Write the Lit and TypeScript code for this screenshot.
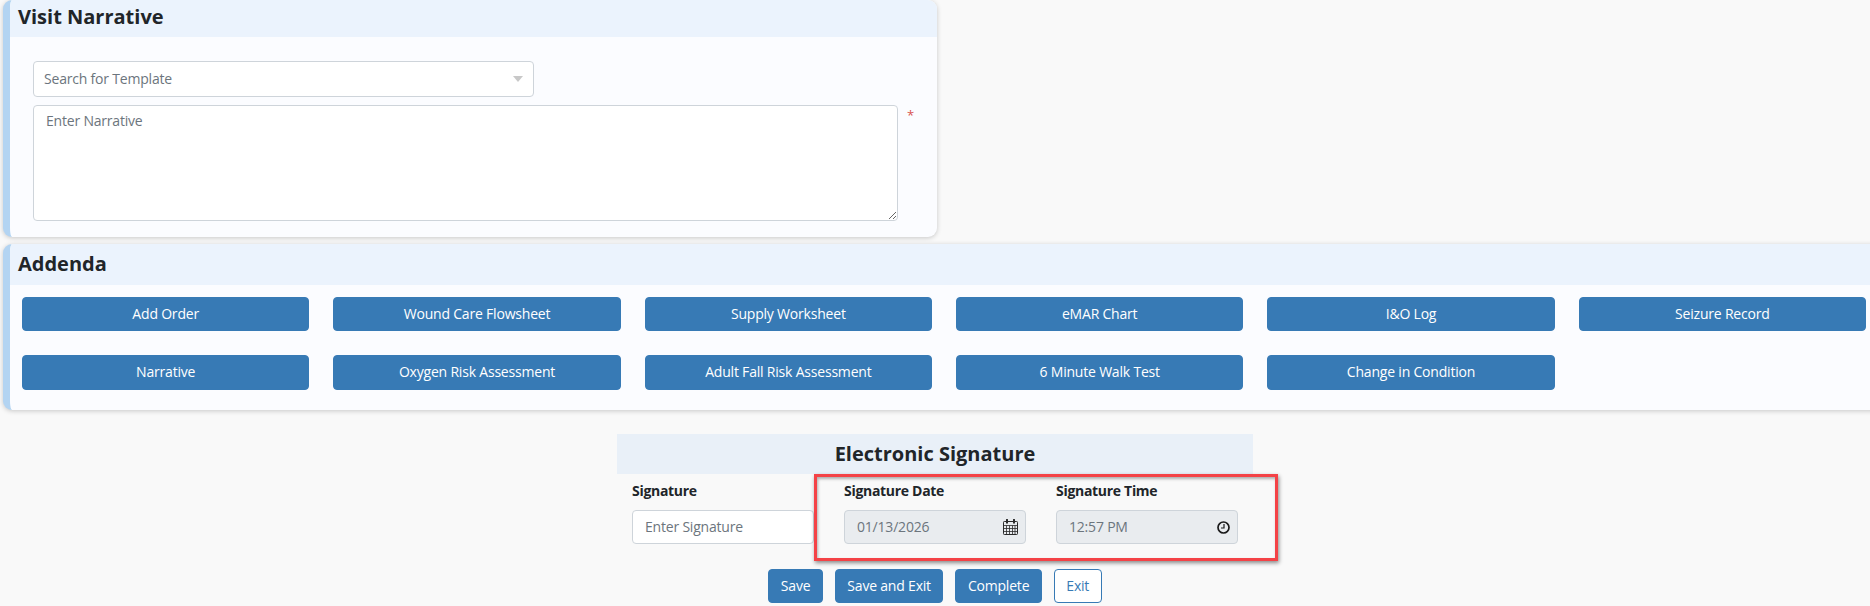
import { LitElement, html, css } from 'lit';
import { customElement } from 'lit/decorators.js';

const ADDENDA = [
  'Add Order', 'Wound Care Flowsheet', 'Supply Worksheet', 'eMAR Chart', 'I&O Log', 'Seizure Record',
  'Narrative', 'Oxygen Risk Assessment', 'Adult Fall Risk Assessment', '6 Minute Walk Test', 'Change in Condition',
];

const calendarIcon = html`
  <svg class="icon" width="15" height="16" viewBox="0 0 15 16" fill="none" stroke="#2a2a2a" stroke-width="1">
    <path d="M4 .8v3M11 .8v3" stroke-width="2" stroke-linecap="round"/>
    <rect x=".5" y="2.5" width="14" height="13" rx=".8"/>
    <path d="M.5 6.5h14M.5 9.5h14M.5 12.5h14M3.5 6.5v9M6.5 6.5v9M9.5 6.5v9M12 6.5v9" stroke-width=".8"/>
  </svg>`;

const clockIcon = html`
  <svg class="icon" width="13" height="13" viewBox="0 0 13 13" fill="none" stroke="#1a1a1a">
    <circle cx="6.5" cy="6.5" r="5.5" stroke-width="1.7"/>
    <path d="M7 3v4H4" stroke-width="1.2"/>
  </svg>`;

@customElement('app-root')
export class AppRoot extends LitElement {
  static styles = css`
    :host {
      display: block;
      height: 606px;
      overflow: hidden;
      background: #f9f9f9;
      font-family: 'Open Sans', sans-serif;
      font-size: 14px;
      letter-spacing: -0.2px;
      color: #212529;
    }

    .card {
      margin-left: 3px;
      background: #fbfcff;
      border-left: 7px solid #b3d4f2;
      border-radius: 9px;
      box-shadow: 0 1px 5px rgba(0, 0, 0, 0.2);
      overflow: hidden;
    }

    .narrative {
      width: 927px;
      height: 237px;
    }

    .addenda {
      margin: 7px -12px 0 3px;
      height: 166px;
    }

    .card-title {
      margin: 0;
      height: 37px;
      padding-left: 8px;
      background: #ebf3fd;
      font-size: 20px;
      font-weight: 700;
      letter-spacing: 0;
      line-height: 34px;
    }

    .addenda .card-title {
      height: 41px;
      line-height: 40px;
    }

    .narrative-body {
      display: flex;
      flex-direction: column;
      gap: 8px;
      padding: 24px 0 0 23px;
    }

    .select {
      display: flex;
      align-items: center;
      justify-content: space-between;
      box-sizing: border-box;
      width: 501px;
      height: 36px;
      padding: 0 10px 2px;
      background: #fff;
      border: 1px solid #ced4da;
      border-radius: 4px;
      color: #6c757d;
    }

    .caret {
      width: 0;
      height: 0;
      margin-top: 2px;
      border-left: 5px solid transparent;
      border-right: 5px solid transparent;
      border-top: 6px solid #c8c8c8;
    }

    .text-row {
      display: flex;
      gap: 9px;
    }

    textarea {
      box-sizing: border-box;
      width: 865px;
      height: 116px;
      padding: 5px 12px;
      background: #fff;
      border: 1px solid #ced4da;
      border-radius: 4px;
      font: inherit;
      letter-spacing: inherit;
      color: #495057;
    }

    textarea::placeholder,
    input::placeholder {
      color: #6c757d;
      opacity: 1;
    }

    .required {
      color: #d9534f;
      font-size: 13px;
      line-height: 20px;
    }

    .addenda-grid {
      display: grid;
      grid-template-columns: repeat(6, 1fr);
      gap: 24px;
      padding: 12px 16px 0 12px;
    }

    .btn {
      box-sizing: border-box;
      height: 34px;
      padding: 0 12px 2px;
      background: #377ab5;
      border: 1px solid #377ab5;
      border-radius: 4px;
      font: inherit;
      letter-spacing: inherit;
      color: #fff;
    }

    .addenda-grid .btn:nth-child(n + 7) {
      height: 35px;
    }

    .signature {
      position: relative;
      width: 636px;
      margin: 24px auto 0;
    }

    .signature-title {
      margin: 0;
      height: 40px;
      background: #e9f0f8;
      font-size: 20px;
      font-weight: 700;
      letter-spacing: 0;
      line-height: 40px;
      text-align: center;
    }

    .fields {
      display: grid;
      grid-template-columns: repeat(3, 182px);
      gap: 30px;
      padding: 7px 15px 0;
    }

    label {
      display: block;
      margin-bottom: 9px;
      font-weight: 700;
      letter-spacing: -0.3px;
      line-height: 20px;
    }

    .input {
      display: flex;
      align-items: center;
      justify-content: space-between;
      box-sizing: border-box;
      width: 100%;
      height: 34px;
      padding: 0 7px 0 12px;
      background: #e9ecef;
      border: 1px solid #ced4da;
      border-radius: 4px;
      font: inherit;
      letter-spacing: inherit;
      color: #6c757d;
    }

    input.input {
      padding-bottom: 2px;
      background: #fff;
    }

    .value {
      padding-bottom: 2px;
    }

    .highlight {
      position: absolute;
      left: 197px;
      top: 40px;
      width: 464px;
      height: 87px;
      box-sizing: border-box;
      border: 3px solid #f44246;
      box-shadow: 1px 2px 4px rgba(0, 0, 0, 0.45), inset 1px 2px 3px rgba(0, 0, 0, 0.3);
    }

    .actions {
      display: flex;
      justify-content: center;
      gap: 12px;
      margin-top: 25px;
    }

    .actions .btn {
      padding: 0 11.5px 2px;
    }

    .btn.outline {
      background: #fff;
      color: #377ab5;
    }
  `;

  render() {
    return html`
      <section class="card narrative">
        <h2 class="card-title">Visit Narrative</h2>
        <div class="narrative-body">
          <div class="select">Search for Template<span class="caret"></span></div>
          <div class="text-row">
            <textarea placeholder="Enter Narrative"></textarea>
            <span class="required">*</span>
          </div>
        </div>
      </section>

      <section class="card addenda">
        <h2 class="card-title">Addenda</h2>
        <div class="addenda-grid">
          ${ADDENDA.map(name => html`<button class="btn">${name}</button>`)}
        </div>
      </section>

      <section class="signature">
        <h2 class="signature-title">Electronic Signature</h2>
        <div class="fields">
          <div>
            <label>Signature</label>
            <input class="input" placeholder="Enter Signature" />
          </div>
          <div>
            <label>Signature Date</label>
            <div class="input"><span class="value">01/13/2026</span> ${calendarIcon}</div>
          </div>
          <div>
            <label>Signature Time</label>
            <div class="input"><span class="value">12:57 PM</span> ${clockIcon}</div>
          </div>
        </div>
        <div class="highlight"></div>
        <div class="actions">
          <button class="btn">Save</button>
          <button class="btn">Save and Exit</button>
          <button class="btn">Complete</button>
          <button class="btn outline">Exit</button>
        </div>
      </section>
    `;
  }
}
